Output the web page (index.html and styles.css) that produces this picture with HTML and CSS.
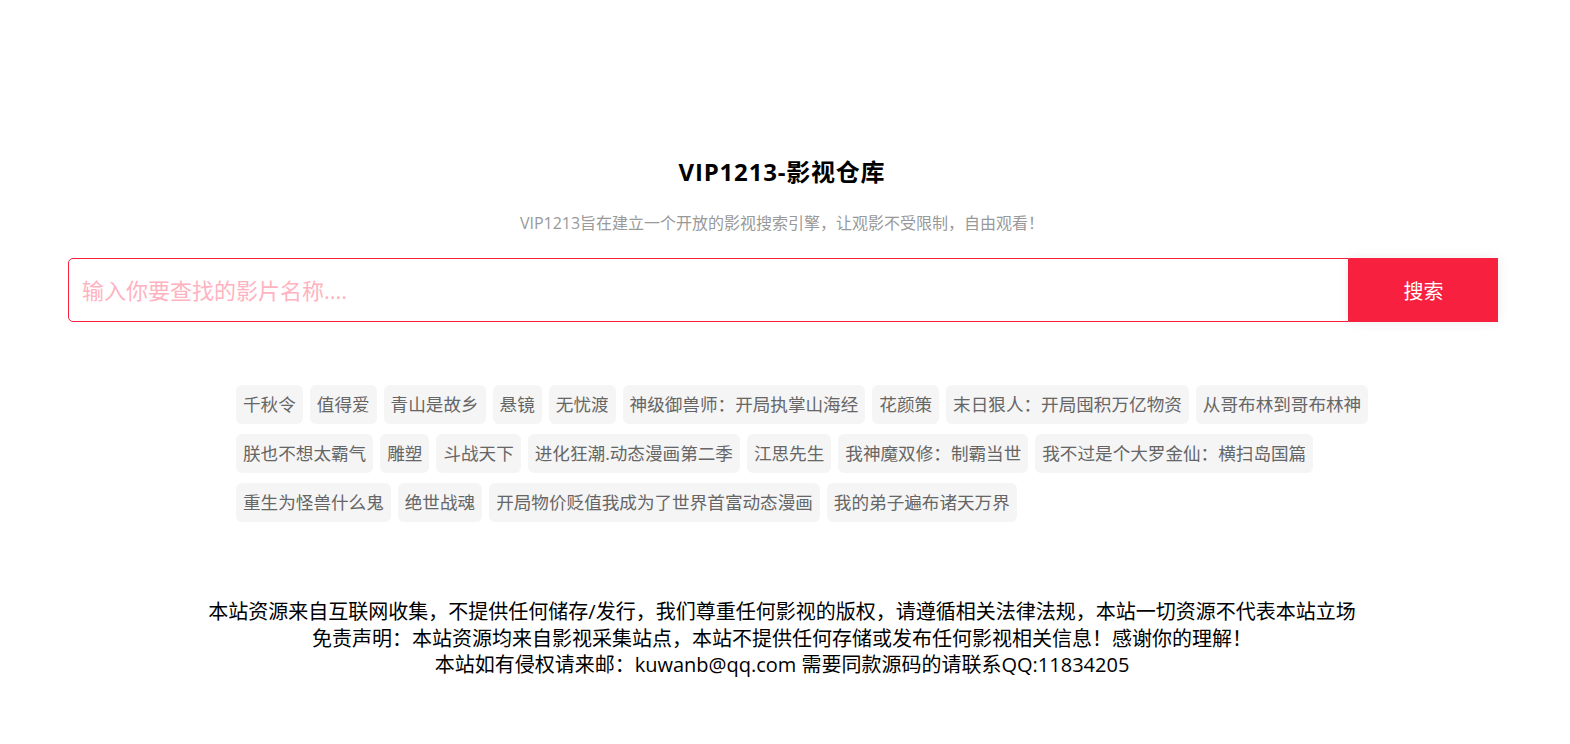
FILE: index.html
```html
<!DOCTYPE html>
<html lang="zh-CN">
<head>
<meta charset="utf-8">
<title>VIP1213-影视仓库</title>
<link rel="stylesheet" href="styles.css">
</head>
<body>
<main class="page">
  <h1 class="title">VIP1213-影视仓库</h1>
  <p class="subtitle">VIP1213旨在建立一个开放的影视搜索引擎，让观影不受限制，自由观看！</p>
  <form class="search">
    <input class="search-input" type="text" placeholder="输入你要查找的影片名称....">
    <button class="search-btn" type="button">搜索</button>
  </form>
  <div class="tags">
    <a class="tag">千秋令</a>
    <a class="tag">值得爱</a>
    <a class="tag">青山是故乡</a>
    <a class="tag">悬镜</a>
    <a class="tag">无忧渡</a>
    <a class="tag">神级御兽师：开局执掌山海经</a>
    <a class="tag">花颜策</a>
    <a class="tag">末日狠人：开局囤积万亿物资</a>
    <a class="tag">从哥布林到哥布林神</a>
    <a class="tag">朕也不想太霸气</a>
    <a class="tag">雕塑</a>
    <a class="tag">斗战天下</a>
    <a class="tag">进化狂潮.动态漫画第二季</a>
    <a class="tag">江思先生</a>
    <a class="tag">我神魔双修：制霸当世</a>
    <a class="tag">我不过是个大罗金仙：横扫岛国篇</a>
    <a class="tag">重生为怪兽什么鬼</a>
    <a class="tag">绝世战魂</a>
    <a class="tag">开局物价贬值我成为了世界首富动态漫画</a>
    <a class="tag">我的弟子遍布诸天万界</a>
  </div>
  <footer class="footer">
    <p class="footer-line">本站资源来自互联网收集，不提供任何储存/发行，我们尊重任何影视的版权，请遵循相关法律法规，本站一切资源不代表本站立场</p>
    <p class="footer-line">免责声明：本站资源均来自影视采集站点，本站不提供任何存储或发布任何影视相关信息！感谢你的理解！</p>
    <p class="footer-line">本站如有侵权请来邮：kuwanb@qq.com 需要同款源码的请联系QQ:11834205</p>
  </footer>
</main>
</body>
</html>
```

FILE: styles.css
```css
* { box-sizing: border-box; }
html, body { margin: 0; padding: 0; background: #fff; }
body {
  font-family: "Open Sans", "Noto Sans CJK SC", sans-serif;
  color: #000;
}
.page {
  width: 1564px;
  padding-top: 156px;
  text-align: center;
}
.title {
  margin: 0;
  font-size: 24px;
  line-height: 32px;
  font-weight: 700;
  letter-spacing: 0.8px;
  color: #000;
}
.subtitle {
  margin: 23px 0 0;
  font-size: 16px;
  line-height: 24px;
  color: #999;
}
.search {
  margin: 23px 66px 0 68px;
  display: flex;
  height: 64px;
}
.search-input {
  flex: 1;
  min-width: 0;
  height: 64px;
  border: 1px solid #f7203f;
  border-radius: 5px 0 0 5px;
  padding: 0 13px;
  font-family: inherit;
  font-size: 22px;
  color: #333;
  outline: none;
  background: #fff;
}
.search-input::placeholder { color: #ffb3c0; }
.search-btn {
  flex: 0 0 149px;
  height: 64px;
  border: 0;
  background: #f7203f;
  color: #fff;
  font-family: inherit;
  font-size: 20px;
  box-shadow: 0 0 12px rgba(0,0,0,0.08);
  cursor: pointer;
}
.tags {
  width: 1140px;
  margin: 63px 0 0 236px;
  display: flex;
  flex-wrap: wrap;
  gap: 10px 7px;
  text-align: left;
}
.tag {
  display: block;
  padding: 7px 7px;
  font-size: 17.6px;
  line-height: 25px;
  color: #666;
  background: #f5f5f5;
  border-radius: 6px;
  text-decoration: none;
}
.footer {
  margin-top: 77px;
}
.footer-line {
  margin: 0;
  font-size: 20px;
  line-height: 26.5px;
  color: #000;
}
```
